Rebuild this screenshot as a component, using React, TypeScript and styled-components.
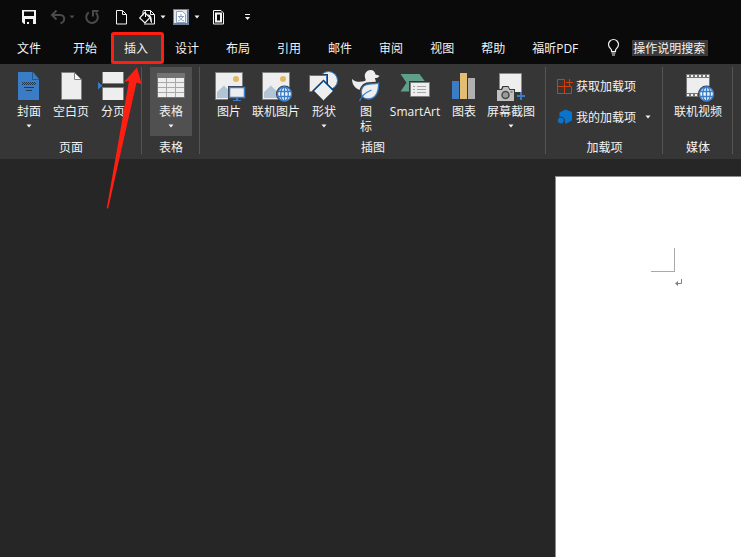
import React from "react";
import styled, { createGlobalStyle, css } from "styled-components";

const color = {
  chrome: "#0a0a0a",
  ribbon: "#363636",
  canvas: "#262626",
  divider: "#555555",
  text: "#f3f3f3",
  dim: "#4a4a4a",
  paper: "#eeeeee",
  edge: "#808080",
  blue: "#3a7dc6",
  alert: "#ff1f12",
};

const GlobalStyle = createGlobalStyle`
  * { box-sizing: border-box; }
  body {
    margin: 0;
    background: ${color.canvas};
    color: ${color.text};
    font-family: "Open Sans", "Noto Sans CJK SC", sans-serif;
    font-size: 12px;
    line-height: 15px;
  }
  button, input { font: inherit; color: inherit; }
  svg { display: block; overflow: visible; flex: none; }
`;

const Window = styled.div`
  position: relative;
  display: flex;
  flex-direction: column;
  min-height: 100vh;
  overflow: hidden;
`;

const bareButton = css`
  border: 0;
  padding: 0;
  background: none;
  cursor: pointer;
`;

/* Quick access bar */
const QuickBar = styled.header`
  display: flex;
  align-items: center;
  height: 33px;
  padding-left: 21px;
  background: ${color.chrome};
`;

const QuickButton = styled.button<{ $gap?: number; $dim?: boolean }>`
  ${bareButton}
  display: flex;
  margin-left: ${(p) => p.$gap ?? 0}px;
  color: ${(p) => (p.$dim ? color.dim : color.text)};
`;

/* Tabs */
const TabRow = styled.nav`
  display: flex;
  align-items: stretch;
  gap: 1px;
  height: 31px;
  background: ${color.chrome};
`;

const Tab = styled.button<{ $active?: boolean; $file?: boolean }>`
  ${bareButton}
  position: relative;
  padding: ${(p) => (p.$file ? "0 18px 0 17px" : "0 13px")};
  white-space: nowrap;
  background: ${(p) => (p.$active ? color.ribbon : "transparent")};
`;

const Highlight = styled.span`
  position: absolute;
  inset: -1px -3px 0 0;
  border: 3px solid ${color.alert};
  border-radius: 3px;
  background: ${color.ribbon};
`;

const TabText = styled.span`
  position: relative;
`;

const Search = styled.label`
  display: flex;
  align-items: center;
  gap: 12px;
  margin-left: 15px;
  padding-bottom: 2px;
`;

const SearchBox = styled.input`
  width: 76px;
  height: 16px;
  border: 0;
  padding: 0 1px;
  background: #3a3a3a;
  outline: 0;
`;

/* Ribbon */
const Ribbon = styled.main`
  display: flex;
  height: 95px;
  padding-top: 3px;
  background: ${color.ribbon};
`;

const Group = styled.section<{ $inset: number }>`
  display: flex;
  flex-direction: column;
  align-items: center;
  flex: none;
  height: 87px;
  padding: 0 ${(p) => p.$inset - 1}px 0 ${(p) => p.$inset}px;
  border-right: 1px solid ${color.divider};
`;

const Tools = styled.div`
  display: flex;
  flex: none;
  height: 69px;
`;

const GroupName = styled.h2`
  margin: 4px 0 0;
  font-size: 12px;
  font-weight: 400;
`;

const Tool = styled.button<{ $width: number; $on?: boolean }>`
  ${bareButton}
  display: flex;
  flex-direction: column;
  align-items: center;
  width: ${(p) => p.$width}px;
  padding-top: 3px;
  white-space: nowrap;
  background: ${(p) => (p.$on ? "#505050" : "transparent")};
`;

const ToolText = styled.span`
  margin: 2px 0 5px;
`;

const AddInList = styled.div`
  display: flex;
  flex-direction: column;
  flex: none;
  gap: 15px;
  height: 69px;
  padding-top: 11px;
`;

const AddIn = styled.button`
  ${bareButton}
  display: flex;
  align-items: center;
  gap: 3px;
  height: 16px;
  white-space: nowrap;
`;

const AddInText = styled.span`
  margin-right: 5px;
`;

/* Document */
const Workspace = styled.div`
  display: grid;
  grid-template-columns: 1fr 186px;
  flex: 1;
  padding-top: 17px;
  background: ${color.canvas};
`;

const Sheet = styled.article`
  grid-column: 2;
  padding: 71px 0 0 95px;
  border: solid #8c8c8c;
  border-width: 1px 0 0 1px;
  background: #ffffff;
`;

const MarginCorner = styled.div`
  width: 24px;
  height: 24px;
  margin-bottom: 7px;
  border: solid #a9a9a9;
  border-width: 0 1px 1px 0;
`;

const ParagraphMark = styled.div`
  padding-left: 24px;
`;

const Pointer = styled.svg`
  position: absolute;
  left: 104px;
  top: 64px;
  pointer-events: none;
`;

/* Icons */
const Caret = () => (
  <svg width="8" height="4" viewBox="0 0 8 4">
    <path d="M1.500 .5h5L4 3.500z" fill="currentColor" />
  </svg>
);

const Small = ({ children }: { children: React.ReactNode }) => (
  <svg width="16" height="16" viewBox="0 0 16 16" fill="none">
    {children}
  </svg>
);

const Large = ({ children }: { children: React.ReactNode }) => (
  <svg width="32" height="32" viewBox="0 0 32 32" fill="none">
    {children}
  </svg>
);

const SaveIcon = () => (
  <Small>
    <path fillRule="evenodd" d="M1 1h14v14H3L1 13zM3 2.500V7h10V2.500zM4 10v5h2v-2h2v2h4v-5z" fill="#f3f3f3" />
  </Small>
);

const UndoIcon = () => (
  <Small>
    <path d="M6.500 1.500 2 6l4.500 4.500M2.500 6H10c5.500.3 5.500 6.500.5 8.500" stroke="currentColor" strokeWidth="2" />
  </Small>
);

const RedoIcon = () => (
  <Small>
    <path d="M4.800 3.300a5.800 5.800 0 1 0 7 .4" stroke="currentColor" strokeWidth="2" />
    <path d="M9 7.500V2h5.500" stroke="currentColor" strokeWidth="2" />
  </Small>
);

const NewIcon = () => (
  <Small>
    <path d="M3.500 1.500h6l4 4v9.500h-10zM9.500 1.500v4h4" stroke="currentColor" />
  </Small>
);

const FillIcon = () => (
  <Small>
    <path d="M5 1.500h6.500l4 4V15H5M11.500 1.500v4h4" stroke="currentColor" />
    <path d="M5.500 3.500 11 8.500 6 14 .7 9z" fill="#0a0a0a" stroke="currentColor" strokeWidth="1.200" />
    <path d="M4 6.500V2.500c0-1.500 2.500-1.500 2.500 0V8" stroke="currentColor" />
    <path d="M8.500 5.500c3 0 4.500 1.500 4.500 8.500-2-.5-2-3.500-2-5z" fill="currentColor" />
  </Small>
);

const LanguageIcon = () => (
  <Small>
    <path d="M0 0h16v16H0z" fill="#6c7f98" />
    <path d="M1 1h13v13H1z" fill="#dfe7f1" />
    <path d="M3.500 2.500h6l3 3v8h-9z" fill="#fff" stroke="#8fa0b8" />
    <path d="M8 5v2M5 7.500h6M9.800 7.500C9 10 7 11.500 5 12M6.200 7.500C7 10 9 11.500 11 12" stroke="#8ba0bd" />
  </Small>
);

const LayoutIcon = () => (
  <Small>
    <path d="M2.500 1.500H10l2.500 2.500v11h-10z" stroke="currentColor" />
    <path d="M5 4.500h5v8H5z" stroke="currentColor" strokeWidth="2" />
  </Small>
);

const CustomizeIcon = () => (
  <Small>
    <path d="M6 5.500h5" stroke="currentColor" />
    <path d="M6 8h5l-2.500 3z" fill="currentColor" />
  </Small>
);

const BulbIcon = () => (
  <svg width="13" height="17" viewBox="0 0 13 17" fill="none">
    <path d="M4.500 12.500V11C3.800 9.300 1.500 8.500 1.500 5.500a5 5 0 0 1 10 0c0 3-2.300 3.800-3 5.500v1.500zM4.500 14h4M5 16h3" stroke="#f3f3f3" strokeWidth="1.200" />
  </svg>
);

const CoverIcon = () => (
  <Large>
    <path d="M5 2h14v8h7v20H5z" fill={color.blue} />
    <path d="M20 2v7h6z" fill={color.blue} />
    <path d="M19.500 2v7.500H26" stroke="#245a94" />
    <path d="M9 12.500h13M9 14.500h13" stroke="#26384c" strokeDasharray="1 1" />
    <path d="M10 13.500h13" stroke="#26384c" strokeDasharray="1 1" />
    <path d="M11 17.500h10M13 20.500h6" stroke="#26384c" />
  </Large>
);

const BlankIcon = () => (
  <Large>
    <path d="M6.500 2.500h13l7 7v20h-20z" fill={color.paper} stroke={color.edge} />
    <path d="M19.500 2.500v7h7z" fill="#f8f8f8" stroke={color.edge} />
  </Large>
);

const BreakIcon = () => (
  <Large>
    <path d="M5.500 2v11.500h21V2M5.500 30V17.500h21V30" fill={color.paper} stroke={color.edge} />
    <path d="m1 12 4.500 3.700L1 19.500z" fill={color.blue} />
  </Large>
);

const TableIcon = () => (
  <Large>
    <path d="M2 3h28v25H2z" fill="#737373" />
    <path d="M3 8h26v19H3z" fill={color.paper} />
    <path d="M3 12.500h26M3 17.500h26M3 22.500h26M11.500 8v19M20.500 8v19" stroke="#a8a8a8" />
  </Large>
);

const Photo = () => (
  <>
    <path d="M2.500 2.500h27v27h-27z" fill={color.paper} stroke={color.edge} />
    <circle cx="23" cy="9" r="3" fill="#e2b865" />
    <path d="M4 28v-6l7-6.500L23 28z" fill="#b1c5d6" />
  </>
);

const Globe = () => (
  <>
    <circle cx="24.500" cy="24" r="8.500" fill={color.ribbon} />
    <circle cx="24.500" cy="24" r="7" fill="#f1f6fb" stroke={color.blue} strokeWidth="1.500" />
    <path d="M18 21.500h13M18 26.500h13M24.500 17v14" stroke={color.blue} strokeWidth="1.300" />
    <ellipse cx="24.500" cy="24" rx="3.800" ry="7" stroke={color.blue} strokeWidth="1.300" />
  </>
);

const PictureIcon = () => (
  <Large>
    <Photo />
    <path d="M15 16h18v14H15z" fill={color.ribbon} />
    <path d="M16.500 17.500h15v10h-15z" fill={color.paper} stroke={color.blue} strokeWidth="1.500" />
    <path d="M23 28h2v2h3v1h-8v-1h3z" fill={color.blue} />
  </Large>
);

const OnlinePictureIcon = () => (
  <Large>
    <Photo />
    <Globe />
  </Large>
);

const ShapesIcon = () => (
  <Large>
    <circle cx="20.500" cy="10.500" r="9" fill={color.paper} stroke={color.blue} />
    <path d="M1.500 5.500h17v16h-17z" fill={color.paper} stroke={color.ribbon} strokeWidth="3" />
    <path d="M1.500 5.500h17v16h-17z" fill={color.paper} stroke={color.blue} />
    <path d="m15.500 11.500 9.500 9.500-9.500 9.500L6 21z" fill={color.paper} stroke={color.ribbon} strokeWidth="3" />
    <path d="m15.500 11.500 9.500 9.500-9.500 9.500L6 21z" fill={color.paper} stroke={color.blue} />
  </Large>
);

const DuckIcon = () => (
  <Large>
    <path d="M2 9c3 3 8 3.500 13 2 1.500-1 0-2.500-.2-4.500C14.500 3 17 0 20.500 0c3 0 4.500 2 5 4.500l4 1.200c-1 2-3 2.300-4.500 2.300 0 2 2 4 1 8-1 4-5 5-10 5C8 21 2 17 2 9z" fill={color.paper} />
    <path d="M28.500 13c.5 9-3 16-10.500 16-8.500 0-9-12-1-14.500 4-1 7.500 0 11.500-1.500z" fill={color.paper} stroke={color.ribbon} strokeWidth="4" />
    <path d="M28.500 13c.5 9-3 16-10.500 16-8.500 0-9-12-1-14.500 4-1 7.500 0 11.500-1.500z" fill={color.paper} stroke={color.blue} strokeWidth="1.300" />
    <path d="M9.500 31c2-5 6-8.500 12-11" stroke={color.blue} strokeWidth="1.300" />
  </Large>
);

const SmartArtIcon = () => (
  <Large>
    <path d="M1.500 4h19l6.500 8.700-6.500 8.800h-19l6-8.800z" fill="#5f9f8b" />
    <path d="M10 11h22v17H10z" fill={color.ribbon} />
    <path d="M11.500 12.500h19v14h-19z" fill={color.paper} stroke={color.edge} />
    <path d="M14 16.500h2M18 16.500h9M14 19.500h2M18 19.500h9M14 22.500h2M18 22.500h9" stroke="#a6a6a6" />
  </Large>
);

const ChartIcon = () => (
  <Large>
    <path d="M4 11h7v18H4z" fill={color.blue} />
    <path d="M12 3h7v26h-7z" fill="#e4bd72" />
    <path d="M20 8h7v21h-7z" fill="#b0b0b0" />
  </Large>
);

const ScreenshotIcon = () => (
  <Large>
    <path d="M4.500 3.500h22v22h-22z" fill={color.paper} stroke="#858585" strokeDasharray="2 1" />
    <path d="M20 22h12v11H20z" fill={color.ribbon} />
    <path d="M1 19h5l1.500-3h6L15 19h5v13H1z" fill={color.ribbon} />
    <path d="M2 20h5l1.500-3h4.500l1.500 3H19v11H2z" fill="#c0c0c0" />
    <circle cx="10.500" cy="25" r="3.500" fill="#9a9a9a" stroke="#4a4a4a" strokeWidth="1.500" />
    <path d="M15.500 22h2" stroke="#4a4a4a" />
    <path d="M26 22v8M22 26h8" stroke={color.blue} strokeWidth="2" />
  </Large>
);

const VideoIcon = () => (
  <Large>
    <path d="M4 4h24v23H4z" fill="#757575" />
    <path d="M5 8h22v15H5z" fill={color.paper} />
    <path d="M5 6h23M5 25h23" stroke="#f3f3f3" strokeWidth="2" strokeDasharray="2 2" />
    <Globe />
  </Large>
);

const StoreIcon = () => (
  <Small>
    <path d="M.5 1.500h7v14h-7zM.5 8.500h14v7H.5zM9 4.500h7M12.500 1v7" stroke="#d03e0c" />
  </Small>
);

const MyAddInsIcon = () => (
  <Small>
    <path d="M8.500.5 15 3v8.500L8.500 15l-1-5-5-2V3.500z" fill="#0a74cc" />
    <circle cx="3.800" cy="11.500" r="3.500" fill="#0a74cc" stroke={color.ribbon} />
  </Small>
);

type ToolSpec = {
  label: React.ReactNode;
  icon: React.ReactNode;
  width: number;
  menu?: boolean;
  on?: boolean;
};

type GroupSpec = { name: string; inset: number; tools: ToolSpec[] };

const pages: GroupSpec = {
  name: "页面",
  inset: 10,
  tools: [
    { label: "封面", icon: <CoverIcon />, width: 38, menu: true },
    { label: "空白页", icon: <BlankIcon />, width: 46 },
    { label: "分页", icon: <BreakIcon />, width: 38 },
  ],
};

const tables: GroupSpec = {
  name: "表格",
  inset: 8,
  tools: [{ label: "表格", icon: <TableIcon />, width: 42, menu: true, on: true }],
};

const illustrations: GroupSpec = {
  name: "插图",
  inset: 10,
  tools: [
    { label: "图片", icon: <PictureIcon />, width: 38 },
    { label: "联机图片", icon: <OnlinePictureIcon />, width: 56 },
    { label: "形状", icon: <ShapesIcon />, width: 40, menu: true },
    { label: <>图<br />标</>, icon: <DuckIcon />, width: 44 },
    { label: "SmartArt", icon: <SmartArtIcon />, width: 54 },
    { label: "图表", icon: <ChartIcon />, width: 44 },
    { label: "屏幕截图", icon: <ScreenshotIcon />, width: 50, menu: true },
  ],
};

const media: GroupSpec = {
  name: "媒体",
  inset: 10,
  tools: [{ label: "联机视频", icon: <VideoIcon />, width: 50 }],
};

const ToolGroup = ({ name, inset, tools }: GroupSpec) => (
  <Group $inset={inset} aria-label={name}>
    <Tools>
      {tools.map((t, i) => (
        <Tool key={i} $width={t.width} $on={t.on}>
          {t.icon}
          <ToolText>{t.label}</ToolText>
          {t.menu && <Caret />}
        </Tool>
      ))}
    </Tools>
    <GroupName>{name}</GroupName>
  </Group>
);

const tabs = ["开始", "插入", "设计", "布局", "引用", "邮件", "审阅", "视图", "帮助", "福昕PDF"];

export default function App() {
  return (
    <Window>
      <GlobalStyle />
      <QuickBar>
        <QuickButton aria-label="保存"><SaveIcon /></QuickButton>
        <QuickButton aria-label="撤消" $gap={13} $dim><UndoIcon /></QuickButton>
        <QuickButton aria-label="撤消列表" $gap={2} $dim><Caret /></QuickButton>
        <QuickButton aria-label="重复" $gap={8} $dim><RedoIcon /></QuickButton>
        <QuickButton aria-label="新建" $gap={13}><NewIcon /></QuickButton>
        <QuickButton aria-label="填充" $gap={10}><FillIcon /></QuickButton>
        <QuickButton aria-label="填充选项" $gap={4}><Caret /></QuickButton>
        <QuickButton aria-label="语言" $gap={6}><LanguageIcon /></QuickButton>
        <QuickButton aria-label="语言选项" $gap={4}><Caret /></QuickButton>
        <QuickButton aria-label="页面版式" $gap={10}><LayoutIcon /></QuickButton>
        <QuickButton aria-label="自定义快速访问工具栏" $gap={12}><CustomizeIcon /></QuickButton>
      </QuickBar>
      <TabRow>
        <Tab $file>文件</Tab>
        {tabs.map((name) => {
          const active = name === "插入";
          return (
            <Tab key={name} $active={active}>
              {active && <Highlight />}
              <TabText>{name}</TabText>
            </Tab>
          );
        })}
        <Search>
          <BulbIcon />
          <SearchBox aria-label="操作说明搜索" defaultValue="操作说明搜索" />
        </Search>
      </TabRow>
      <Ribbon>
        <ToolGroup {...pages} />
        <ToolGroup {...tables} />
        <ToolGroup {...illustrations} />
        <Group $inset={11} aria-label="加载项">
          <AddInList>
            <AddIn><StoreIcon /><AddInText>获取加载项</AddInText></AddIn>
            <AddIn><MyAddInsIcon /><AddInText>我的加载项</AddInText><Caret /></AddIn>
          </AddInList>
          <GroupName>加载项</GroupName>
        </Group>
        <ToolGroup {...media} />
      </Ribbon>
      <Workspace>
        <Sheet>
          <MarginCorner />
          <ParagraphMark>
            <svg width="8" height="8" viewBox="0 0 8 8" fill="none">
              <path d="M6.500 0v4.500H1" stroke="#808080" />
              <path d="M0 4.500 3 2v5z" fill="#808080" />
            </svg>
          </ParagraphMark>
        </Sheet>
      </Workspace>
      <Pointer width="40" height="148" viewBox="0 0 40 148">
        <path d="M33 3.500 37.500 20l-5-1.500L4.300 144q-1 1.200-1.500 0L25 17l-5 .8z" fill={color.alert} />
      </Pointer>
    </Window>
  );
}
